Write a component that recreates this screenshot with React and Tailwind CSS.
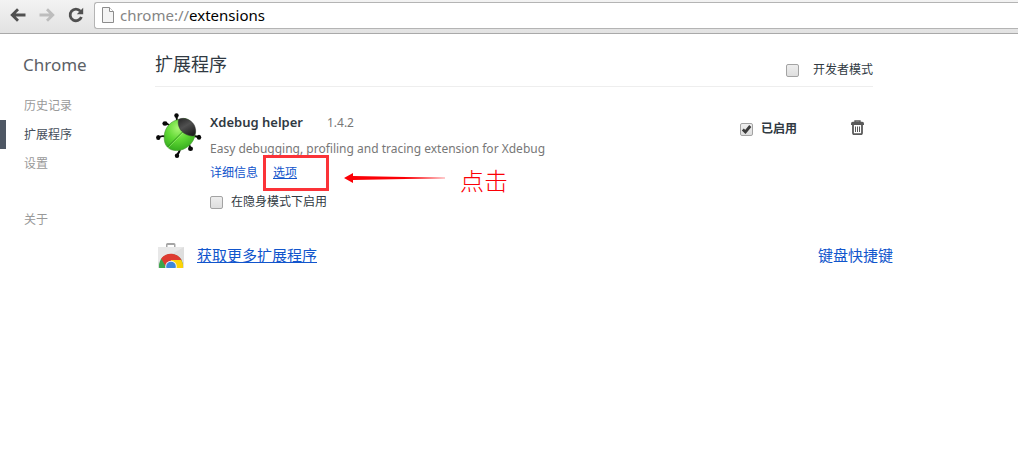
import React from "react";

function BackIcon() {
  return (
    <svg width="16" height="14" viewBox="0 0 16 14" fill="none" stroke="currentColor" strokeWidth="2.8">
      <path d="M15.500 7H2.500M8 1.200L2.200 7L8 12.800" />
    </svg>
  );
}

function ForwardIcon() {
  return (
    <svg width="16" height="14" viewBox="0 0 16 14" fill="none" stroke="currentColor" strokeWidth="2.8">
      <path d="M0.500 7h13M8 1.200L13.800 7L8 12.800" />
    </svg>
  );
}

function ReloadIcon() {
  return (
    <svg width="16" height="16" viewBox="0 0 16 16" fill="none">
      <path d="M12.4 4.2A5.8 5.8 0 1 0 13.4 10" stroke="currentColor" strokeWidth="2.8" />
      <path d="M15.2 0.8V7.2H8.8Z" fill="currentColor" />
    </svg>
  );
}

function PageIcon() {
  return (
    <svg width="12" height="16" viewBox="0 0 12 16" className="shrink-0">
      <path d="M0.500 0.500H7.500L11.500 4.500V15.500H0.500Z" fill="#f4f4f4" stroke="#8c8c8c" />
      <path d="M7.500 0.500V4.500H11.500" fill="#fff" stroke="#8c8c8c" />
    </svg>
  );
}

function BugIcon() {
  return (
    <svg width="46" height="46" viewBox="0 0 46 46" className="block">
      <defs>
        <radialGradient id="shell" cx="0.45" cy="0.3" r="0.7">
          <stop offset="0" stopColor="#a8f573" />
          <stop offset="0.5" stopColor="#62d936" />
          <stop offset="1" stopColor="#36ae1e" />
        </radialGradient>
        <linearGradient id="head" x1="0" y1="0" x2="0.6" y2="1">
          <stop offset="0" stopColor="#252525" />
          <stop offset="0.5" stopColor="#505050" />
          <stop offset="1" stopColor="#222" />
        </linearGradient>
      </defs>
      <g fill="none" stroke="#0a0a0a" strokeWidth="1.9">
        <path d="M20.500 3L21 8M9.500 10L15 13M2.500 24.500Q5 22.500 10 23.500M38 23L43 24M33 31L34.500 35.500M24 35Q24 39 21 42" />
      </g>
      <g fill="#080808">
        <ellipse cx="20.500" cy="2.600" rx="2.200" ry="2.400" />
        <ellipse cx="9" cy="10.500" rx="2.600" ry="2.200" />
        <ellipse cx="2.300" cy="24.500" rx="2.200" ry="2.500" />
        <ellipse cx="43" cy="24.200" rx="2.200" ry="2.500" />
        <ellipse cx="34.500" cy="35.700" rx="2.500" ry="2.300" />
        <ellipse cx="21" cy="42.800" rx="2.200" ry="2.300" />
      </g>
      <path
        d="M24 6.500C15 7 8.200 15 8.200 24C8 33 13 37.400 20.500 37.600C29 37.600 37.500 31 39 22C40 16 36 7 29 5.500Z"
        fill="url(#shell)"
        stroke="#4a9c35"
        strokeWidth="0.7"
      />
      <path d="M11.500 34L27 18.500" stroke="#2f8f1e" strokeWidth="0.9" />
      <path d="M12.300 34.700L27.700 19.400" stroke="#a4f57a" strokeWidth="0.5" />
      <path
        d="M22.700 6.200C29 3.500 37 7.500 39 14C40.300 18 39.600 21 38.200 22.800C34.500 23.600 28.500 21.500 25.500 18C22.500 14.500 21.500 9.500 22.700 6.200Z"
        fill="url(#head)"
        stroke="#333"
        strokeWidth="0.5"
      />
    </svg>
  );
}

function TrashIcon() {
  return (
    <svg width="13" height="15" viewBox="0 0 13 15" fill="none">
      <path d="M4 2V1H9V2" stroke="#5a5a5a" strokeWidth="1.400" />
      <path d="M0 5V3.500Q0 1.800 1.800 1.800H11.200Q13 1.800 13 3.500V5Z" fill="#5a5a5a" />
      <path d="M2 5V13Q2 14.200 3 14.200H10Q11 14.200 11 13V5" stroke="#5a5a5a" strokeWidth="1.800" />
      <path d="M4.500 6.500V12M6.500 6.500V12M8.500 6.500V12" stroke="#5a5a5a" />
    </svg>
  );
}

function StoreIcon() {
  return (
    <svg width="26" height="25" viewBox="0 0 26 25" className="block">
      <defs>
        <clipPath id="bag">
          <rect width="26" height="25" />
        </clipPath>
      </defs>
      <path d="M0 4H26V25H0Z" fill="#dedede" />
      <path d="M0 4H26L0 19Z" fill="#e8e8e8" />
      <path d="M8 4V1.500Q8 0 9.500 0H16Q17.500 0 17.500 1.500V4H16V2H9.500V4Z" fill="#a5a5a5" />
      <g clipPath="url(#bag)">
        <circle cx="13" cy="23" r="12" fill="#3ba64b" />
        <path d="M13 23L3.200 15.500A12 12 0 0 1 23.700 17.500H13Z" fill="#de3b31" />
        <path d="M13 17H23.300A12 12 0 0 1 25 25H13Z" fill="#fdd308" />
        <path d="M3.200 15.500L8 24L12 18Z" fill="#de3b31" />
        <circle cx="13" cy="23.500" r="5.800" fill="#f3f6f8" />
        <circle cx="13" cy="23.500" r="4.800" fill="#3e86dc" />
      </g>
    </svg>
  );
}

function Checkbox({ id, defaultChecked }) {
  return (
    <span className="relative flex size-[13px] shrink-0">
      <input
        id={id}
        type="checkbox"
        defaultChecked={defaultChecked}
        className="peer size-[13px] appearance-none rounded-[2px] border border-[#a3a3a3] bg-linear-to-b from-[#eeeeee] to-[#dedede]"
      />
      <svg
        viewBox="0 0 13 13"
        className="pointer-events-none absolute inset-0 hidden size-[13px] peer-checked:block"
      >
        <path d="M2.800 6.500L5.400 9L10.300 3" fill="none" stroke="#3c3c3c" strokeWidth="2.800" />
      </svg>
    </span>
  );
}

function Toolbar() {
  return (
    <header className="flex h-[34px] items-center border-b border-[#a9a9a9] bg-linear-to-b from-[#f3f3f3] to-[#e2e2e2] pb-[3px] pl-[10px]">
      <nav aria-label="导航" className="flex items-center gap-[13px] text-[#505050]">
        <button type="button" aria-label="后退"><BackIcon /></button>
        <button type="button" aria-label="前进" className="text-[#bdbdbd]"><ForwardIcon /></button>
        <button type="button" aria-label="重新加载"><ReloadIcon /></button>
      </nav>
      <div className="ml-[10px] flex h-[27px] min-w-0 flex-1 items-center rounded-l-[3px] border border-r-0 border-[#b4b4b4] bg-white pl-[7px] text-[15px]">
        <PageIcon />
        <label htmlFor="address" className="ml-[6px] text-[#858585]">chrome://</label>
        <input
          id="address"
          defaultValue="extensions"
          className="min-w-0 flex-1 bg-transparent text-black outline-none"
        />
      </div>
    </header>
  );
}

function Sidebar() {
  return (
    <aside className="w-[155px] shrink-0 pt-[19px]">
      <h1 className="pl-[23px] text-[17px] leading-6 text-[#5c6166]">Chrome</h1>
      <nav className="mt-[14px] flex flex-col text-[12px] leading-[29px] text-[#999999]">
        <a href="#history" className="pl-6">历史记录</a>
        <a href="#extensions" aria-current="page" className="border-l-[6px] border-[#4e5764] pl-[18px] text-[#464e5a]">
          扩展程序
        </a>
        <a href="#settings" className="pl-6">设置</a>
        <a href="#about" className="mt-[27px] pl-6">关于</a>
      </nav>
    </aside>
  );
}

function ClickHint() {
  return (
    <div className="pointer-events-none absolute -top-2 left-[53px] flex items-start">
      <div className="h-9 w-[66px] border-3 border-[#fb3338]" />
      <svg width="102" height="12" viewBox="0 0 102 12" className="mt-[17px] ml-[15px]">
        <defs>
          <linearGradient id="tail" x1="0" x2="1">
            <stop offset="0.600" stopColor="#fb0006" />
            <stop offset="1" stopColor="#fb0006" stopOpacity="0.200" />
          </linearGradient>
        </defs>
        <path d="M0 6L9 1V4L62 5H101V7H62L9 8V11Z" fill="url(#tail)" />
      </svg>
      <span className="mt-[10px] ml-[14px] text-[24px] leading-8 font-light whitespace-nowrap text-[#fb0006]">点击</span>
    </div>
  );
}

function Extension() {
  return (
    <article className="mt-[26px] flex items-start">
      <div className="w-[55px] shrink-0 pl-px"><BugIcon /></div>
      <div className="-mt-0.5 min-w-0 flex-1 text-[12px] text-[#303942]">
        <div className="flex items-baseline gap-6 leading-[22px]">
          <h3 className="text-[13px] font-semibold">Xdebug helper</h3>
          <span className="text-[#777777]">1.4.2</span>
        </div>
        <p className="mt-1 leading-[22px] text-[#777777]">
          Easy debugging, profiling and tracing extension for Xdebug
        </p>
        <div className="relative mt-[3px] flex h-5 items-center gap-[15px] text-[#1155cc]">
          <a href="#details">详细信息</a>
          <a href="#options" className="underline">选项</a>
          <ClickHint />
        </div>
        <div className="mt-[9px] flex h-5 items-center gap-2">
          <Checkbox id="incognito" />
          <label htmlFor="incognito">在隐身模式下启用</label>
        </div>
      </div>
      <div className="mt-[6px] flex h-5 w-[133px] shrink-0 items-center gap-2 text-[12px]">
        <Checkbox id="enabled" defaultChecked />
        <label htmlFor="enabled" className="font-bold">已启用</label>
        <button type="button" aria-label="删除" className="mr-[9px] mb-1 ml-auto"><TrashIcon /></button>
      </div>
    </article>
  );
}

export default function App() {
  return (
    <div className="min-h-screen overflow-x-hidden bg-white font-['Noto_Sans','Noto_Sans_CJK_SC',sans-serif] text-[#303942]">
      <Toolbar />
      <div className="flex">
        <Sidebar />
        <main className="max-w-[738px] min-w-0 flex-1">
          <div className="mr-5">
            <div className="flex h-[53px] justify-between border-b border-[#eeeeee]">
              <h2 className="pt-[18px] text-[18px] leading-6">扩展程序</h2>
              <div className="mt-[26px] flex h-5 items-center gap-[14px] text-[12px]">
                <Checkbox id="developer" />
                <label htmlFor="developer">开发者模式</label>
              </div>
            </div>
            <Extension />
          </div>
          <footer className="mt-[30px] flex items-center justify-between text-[15px] leading-[26px] text-[#1155cc]">
            <a href="#store" className="flex items-center gap-[13px] pl-[3px]">
              <StoreIcon />
              <span className="underline">获取更多扩展程序</span>
            </a>
            <a href="#shortcuts">键盘快捷键</a>
          </footer>
        </main>
      </div>
    </div>
  );
}
